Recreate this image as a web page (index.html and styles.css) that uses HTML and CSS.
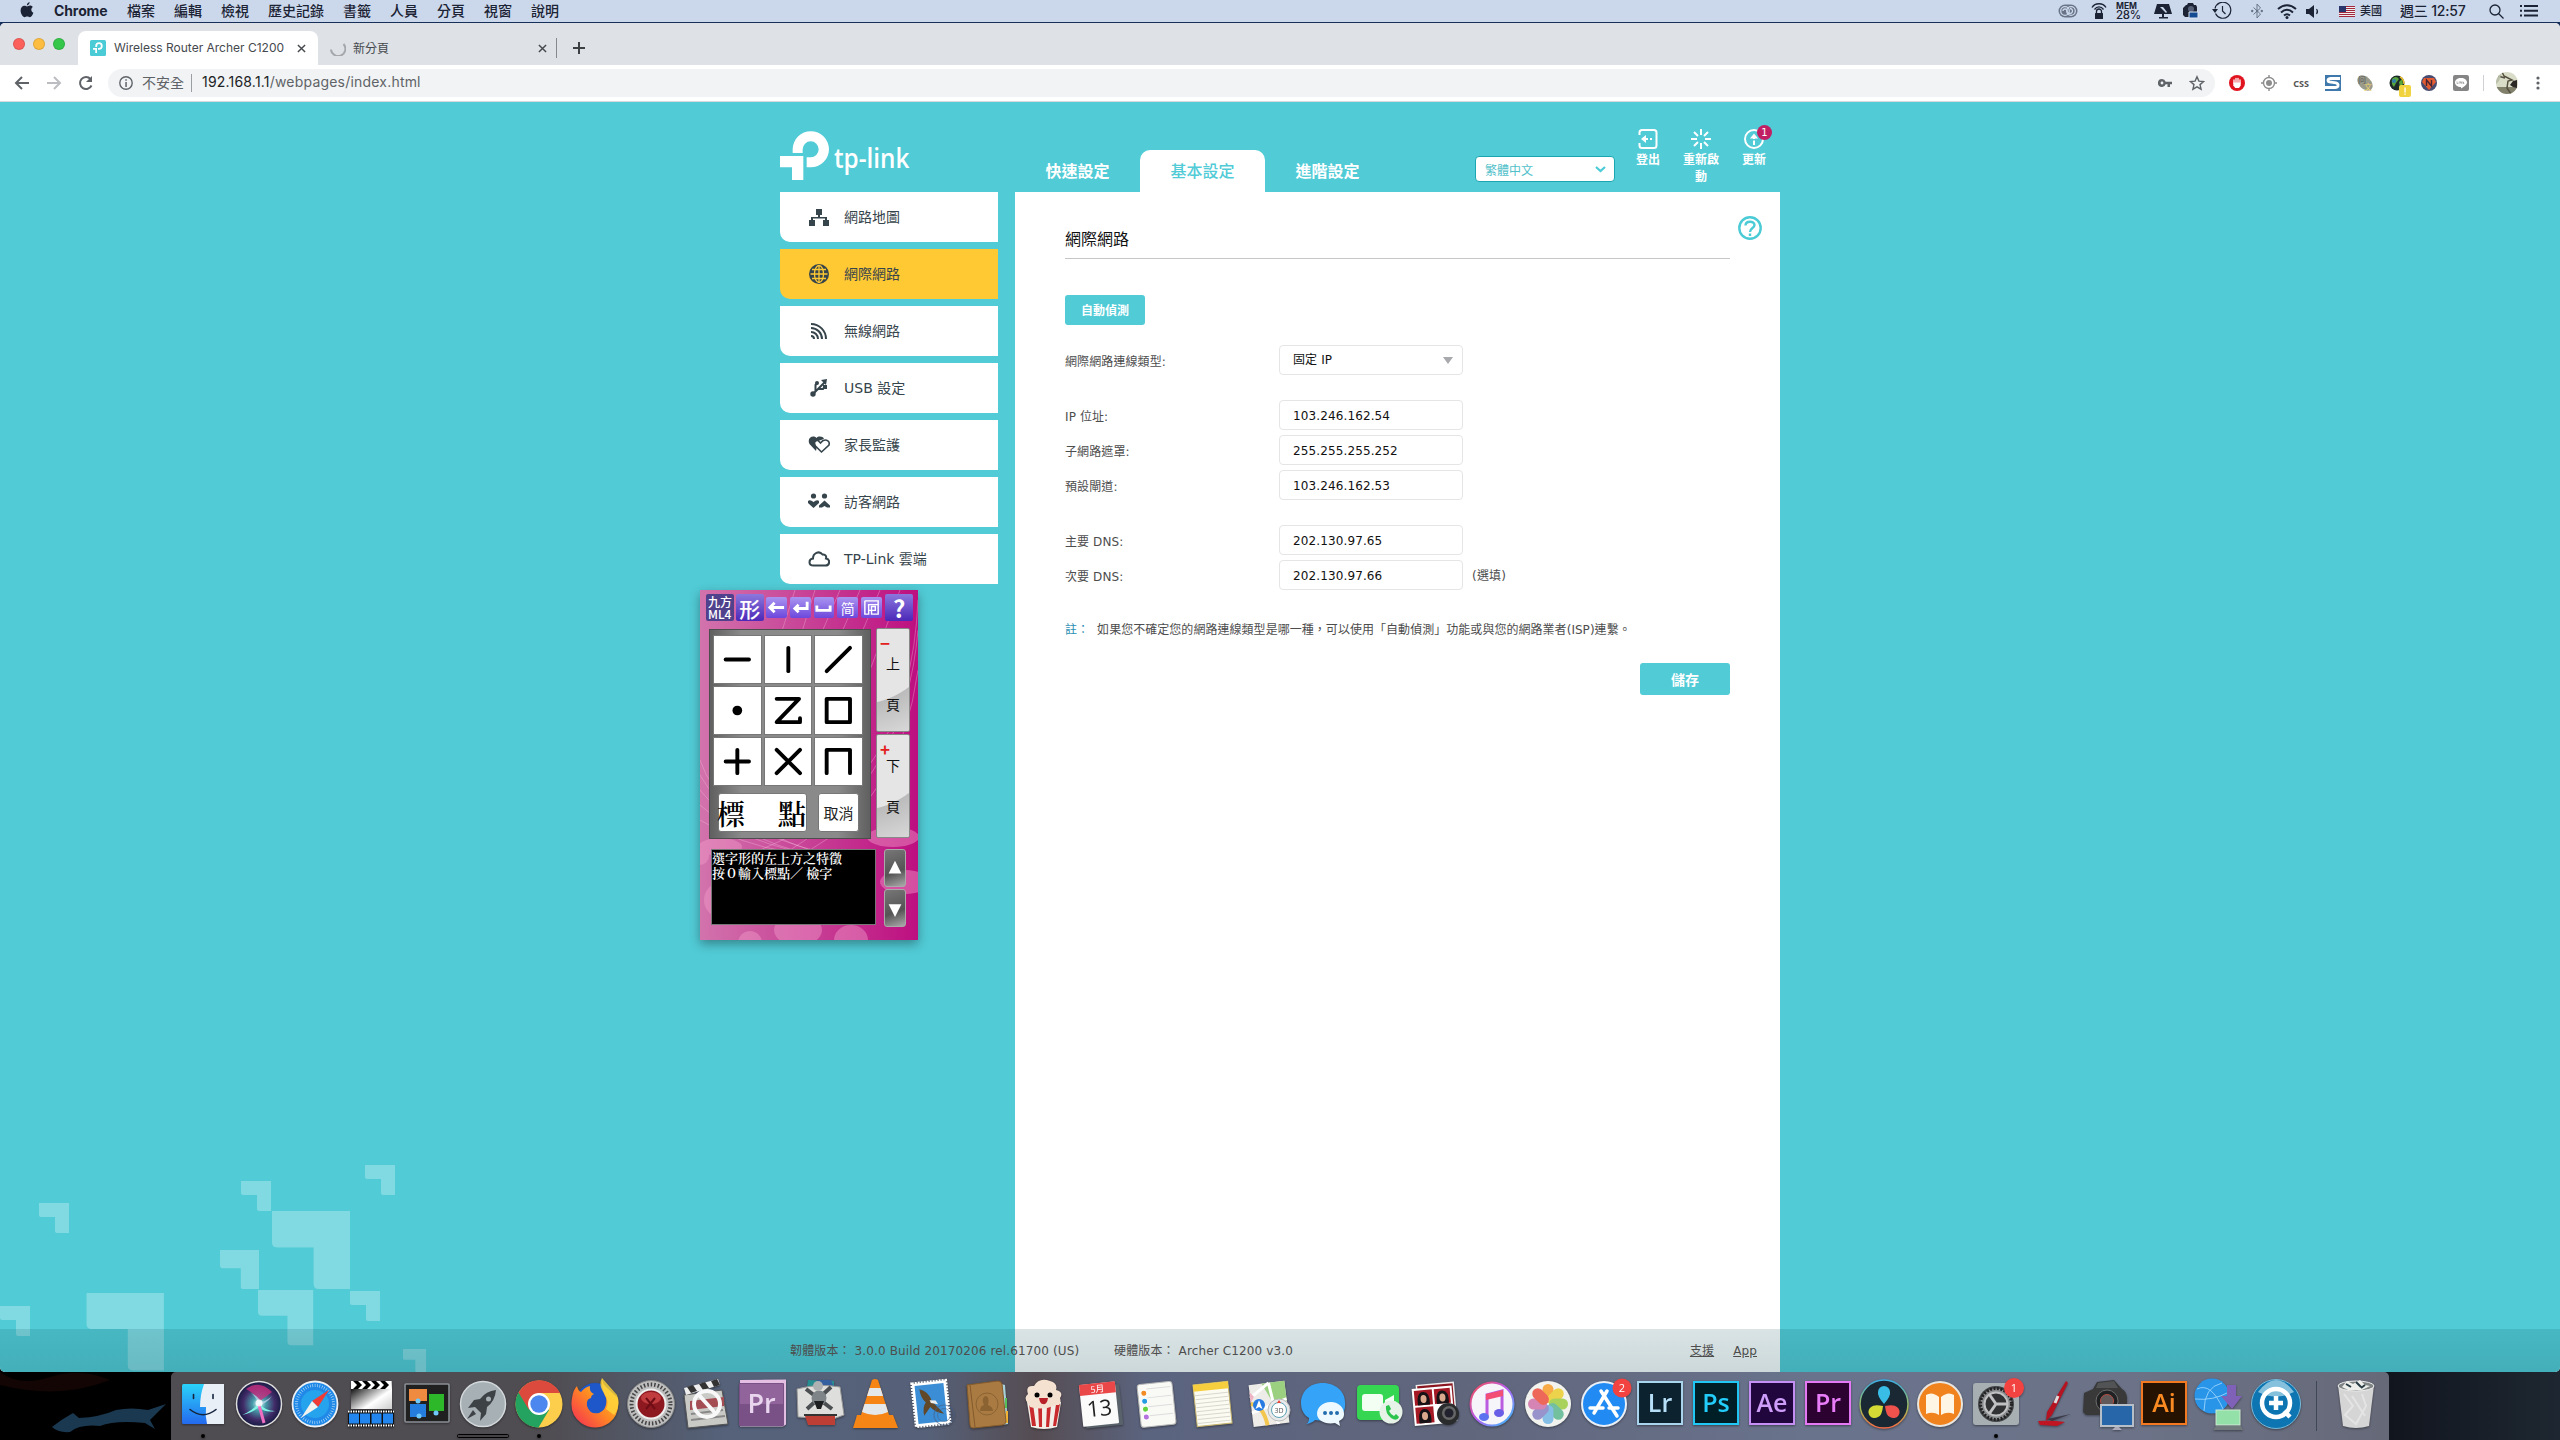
FILE: index.html
```html
<!DOCTYPE html>
<html lang="zh-Hant">
<head>
<meta charset="utf-8">
<title>Wireless Router Archer C1200</title>
<link rel="stylesheet" href="styles.css">
</head>
<body>
<div class="desktop">
  <header class="menubar">
    <svg class="apple" viewBox="0 0 14 16"><path d="M9.6 0C9.700 1.500 8.400 3.300 6.900 3.400 6.700 1.900 8.100.300 9.600 0ZM7 4.400C7.700 4.400 8.700 3.600 10 3.600 11.200 3.600 12.300 4.200 12.900 5.100 10.600 6.500 10.900 9.800 13.400 10.800 12.800 12.600 11.300 15.200 9.800 15.200 8.800 15.200 8.400 14.600 7.200 14.600 6 14.600 5.500 15.200 4.600 15.200 2.900 15.200.600 11.700.600 8.500.600 5.500 2.500 3.800 4.400 3.800 5.500 3.800 6.400 4.400 7 4.400Z"/></svg>
    <nav class="menus"><b>Chrome</b><span>檔案</span><span>編輯</span><span>檢視</span><span>歷史記錄</span><span>書籤</span><span>人員</span><span>分頁</span><span>視窗</span><span>說明</span></nav>
    <div class="status">
      <svg class="dim" width="20" height="14" viewBox="0 0 20 14"><rect x=".500" y=".500" width="19" height="13" rx="6.500"/><g fill="none" stroke="#cbd8ec" stroke-width="1.300"><circle cx="7" cy="7" r="4.300"/><circle cx="13" cy="7" r="4.300"/><path d="M5 7a2 2 0 0 1 4 0q1 3 3 2.500a2.300 2.300 0 1 0 0-5"/></g></svg>
      <svg width="16" height="18" viewBox="0 0 16 18"><g fill="none" stroke="#1b2334" stroke-width="1.300"><path d="M1 5.500C4 .500 12 .500 15 5.500M3.500 7.500C6 4 10 4 12.500 7.500M5.500 12V9.500a2.500 2.500 0 0 1 5 0V12"/></g><rect x="4" y="11" width="8" height="6" rx=".500"/></svg>
      <span class="mem"><small>MEM</small><span>28%</span></span>
      <svg width="18" height="16" viewBox="0 0 18 16"><path d="M3 1h12l3 10H0zM5 14h9v1.500H5zM8 11h2v4H8z"/><path d="M6 4l6 6 1-1-4-5z" fill="#cbd8ec"/></svg>
      <svg width="18" height="16" viewBox="0 0 18 16"><path d="M4 2h1l1-2h5l1 2h2l1 2v10H3L1 12V5z"/><circle cx="9" cy="6" r="3" fill="#566178"/><path d="M7 9h9v6H7z" fill="#154b91" stroke="#dde6f3"/></svg>
      <svg width="20" height="18" viewBox="0 0 20 18"><g fill="none" stroke="#1b2334" stroke-width="1.200"><path d="M3.500 11.500A8 8 0 1 0 3 6.500M10.500 4v5l3 3"/></g><path d="M0 7h6L3 11z"/></svg>
      <svg class="dim" width="12" height="16" viewBox="0 0 12 16"><path d="M2.500 4.500l7 6.500-3.500 4V1l3.500 4-7 6.500" fill="none" stroke="#1b2334"/><circle cx="1.200" cy="8" r="1.200"/><circle cx="6" cy="8" r="1.200"/><circle cx="10.800" cy="8" r="1.200"/></svg>
      <svg width="20" height="15" viewBox="0 0 20 15"><g fill="none" stroke="#1b2334" stroke-width="2"><path d="M1 5Q10-2.500 19 5M4 8.500Q10 3 16 8.500M7 11.500Q10 9 13 11.500"/></g><circle cx="10" cy="13.500" r="1.500"/></svg>
      <svg width="14" height="13" viewBox="0 0 14 13"><path d="M0 4h3l5-4v13L3 9H0z"/><path d="M10.500 4q2 2.500 0 5" fill="none" stroke="#1b2334" stroke-width="1.200"/></svg>
      <span class="input-source"><svg width="16" height="11" viewBox="0 0 16 11"><rect width="16" height="11" fill="#eee"/><path d="M0 .500h16M0 2.500h16M0 4.500h16M0 6.500h16M0 8.500h16M0 10.500h16" stroke="#a32a3c"/><rect width="7" height="6" fill="#28366b"/></svg>美國</span>
      <span class="clock">週三 12:57</span>
      <svg width="15" height="15" viewBox="0 0 15 15"><g fill="none" stroke="#1b2334" stroke-width="1.300"><circle cx="6" cy="6" r="5"/><path d="M9.500 9.500l5 5"/></g></svg>
      <svg width="18" height="12" viewBox="0 0 18 12"><path d="M0 0h2v2H0zM4 0h14v2H4zM0 4.700h2v2H0zM4 4.700h14v2H4zM0 9.500h2v2H0zM4 9.500h14v2H4z"/></svg>
    </div>
  </header>

  <main class="window">
    <div class="tabstrip">
      <div class="lights"><i class="red"></i><i class="amber"></i><i class="green"></i></div>
      <div class="tab active">
        <svg width="16" height="16" viewBox="0 0 16 16"><rect width="16" height="16" rx="1.500" fill="#4acbd6"/><path d="M6.200 7V6a2.800 2.800 0 1 1 2.800 2.800H8" fill="none" stroke="#fff" stroke-width="1.800"/><path d="M3 8h4v5H5.300V9.800H3z" fill="#fff"/></svg>
        <span>Wireless Router Archer C1200</span>
        <svg class="close" viewBox="0 0 10 10"><path d="M1 1l8 8M9 1L1 9"/></svg>
      </div>
      <div class="tab">
        <svg width="16" height="16" viewBox="0 0 16 16"><path d="M1 9.500A7.200 7.200 0 1 0 13.500 4" fill="none" stroke="#a5a7ab" stroke-width="2"/></svg>
        <span>新分頁</span>
        <svg class="close" viewBox="0 0 10 10"><path d="M1 1l8 8M9 1L1 9"/></svg>
      </div>
      <svg class="plus" viewBox="0 0 12 12"><path d="M6 0v12M0 6h12"/></svg>
    </div>
    <div class="toolbar">
      <div class="nav-buttons">
        <svg viewBox="0 0 16 16"><path d="M15 8H2M8 2L2 8l6 6"/></svg>
        <svg class="off" viewBox="0 0 16 16"><path d="M1 8h13M8 2l6 6-6 6"/></svg>
        <svg viewBox="0 0 16 16"><path d="M13.500 10.500A6 6 0 1 1 12.500 4"/><path d="M14 1v6H8z" fill="#5f6368" stroke="none"/></svg>
      </div>
      <div class="omnibox">
        <svg width="14" height="14" viewBox="0 0 14 14"><circle cx="7" cy="7" r="6.200" fill="none" stroke="#5f6368" stroke-width="1.400"/><path d="M6.300 3.300h1.500v1.500H6.300zM6.300 6h1.500v5H6.300z" fill="#5f6368"/></svg>
        <span class="insecure">不安全</span>
        <span class="url"><em>192.168.1.1</em>/webpages/index.html</span>
        <div class="actions">
          <svg width="14" height="10" viewBox="0 0 14 10"><path d="M4 1a4 4 0 1 0 3.700 5.300H9.500V9H12V6.300h2V3.700H7.700A4 4 0 0 0 4 1zm0 2.600A1.400 1.400 0 1 1 4 6.400 1.400 1.400 0 0 1 4 3.600z" fill="#5f6368"/></svg>
          <svg width="16" height="16" viewBox="0 0 16 16"><path d="M8 1.800l1.900 4.300 4.700.400-3.600 3.100 1.100 4.600L8 11.800l-4.100 2.400L5 9.600 1.400 6.500l4.700-.400z" fill="none" stroke="#5f6368" stroke-width="1.400"/></svg>
        </div>
      </div>
      <div class="extensions">
        <svg width="16" height="16" viewBox="0 0 16 16"><circle cx="8" cy="8" r="8" fill="#e0141f"/><path d="M5 8V5M7 7.500V3.500M9 7.500V3.500M11 8V5" stroke="#fff" stroke-width="1.300" stroke-linecap="round"/><path d="M4.300 7.500h7.400V10.500L10 13H6.300L4.300 10.500z" fill="#fff"/></svg>
        <svg width="16" height="16" viewBox="0 0 16 16"><g fill="none" stroke="#8d8d8d" stroke-width="1.400"><circle cx="8" cy="8" r="5.500"/><path d="M8 0v3M8 13v3M0 8h3M13 8h3"/></g><circle cx="8" cy="8" r="3" fill="#8d8d8d"/></svg>
        <span class="css">CSS</span>
        <svg width="16" height="16" viewBox="0 0 16 16"><rect width="16" height="16" fill="#3f78aa"/><path d="M15 3.500H6Q3 3.500 3 5.200 3 7 6 7.200L11 7.800Q13.500 8.500 13 11 12.500 12.500 10 12.500H0" fill="none" stroke="#fff" stroke-width="2.800"/></svg>
        <svg width="16" height="16" viewBox="0 0 16 16"><ellipse cx="8" cy="8" rx="9" ry="6" transform="rotate(45 8 8)" fill="#9a9a8b"/><text x="1" y="8" font-size="8" fill="#555">问</text><text x="7" y="15" font-size="8" fill="#ead36c">文</text></svg>
        <svg class="globe" width="22" height="22" viewBox="0 0 22 22"><circle cx="8" cy="8" r="7.500" fill="#1d2b28"/><path d="M3 4q4-4 7 0l-3 4-2 4q-3-3-2-8zM10 7l3-3 1 5-3 3z" fill="#57a53d"/><circle cx="5" cy="6" r="2" fill="#2f7cab"/><path d="M11 2q4 2 4 7" stroke="#ecc12f" stroke-width="1.500" fill="none"/><rect x="10" y="10" width="12" height="12" rx="2" fill="#f1d340"/><path d="M15.400 12.500h1.300v5h-1.300zM15.400 18.500h1.300v1.300h-1.300z" fill="#fff"/></svg>
        <svg width="16" height="16" viewBox="0 0 16 16"><circle cx="8" cy="8" r="8" fill="#494c71"/><path d="M3 3h10l2 4-7 8-7-8z" fill="#e35c32"/><path d="M5.500 11V5l5 6V5" fill="none" stroke="#4a2531" stroke-width="1.400"/></svg>
        <svg width="16" height="16" viewBox="0 0 16 16"><rect width="16" height="16" rx="2" fill="#858585"/><path d="M8 3c3.500 0 6 2 6 4.500S10 12.500 8 13.500V12C4.500 12 2 10 2 7.500S4.500 3 8 3z" fill="#fff"/><path d="M4 6.500v2h1.300M6.200 6.500v2M7.300 8.500v-2l1.400 2v-2M10 6.500v2h1.300M10 7.500h1" fill="none" stroke="#858585" stroke-width=".600"/></svg>
      </div>
      <i class="rule"></i>
      <svg class="avatar" viewBox="0 0 22 22"><defs><clipPath id="av"><circle cx="11" cy="11" r="11"/></clipPath></defs><g clip-path="url(#av)"><rect width="22" height="22" fill="#d9ddc8"/><path d="M0 15h22v8H0z" fill="#80806b"/><path d="M6 0l2 4 8 4-4 1-1 7 4 6M2 4l7 2" fill="none" stroke="#55503f" stroke-width="1.500"/><path d="M17 9l4-1v8l-4-1-3-2z" fill="#2b2724"/><path d="M0 0h6L3 9 0 12z" fill="#b8bea8"/></g></svg>
      <svg class="more" viewBox="0 0 4 14"><circle cx="2" cy="2" r="1.600"/><circle cx="2" cy="7" r="1.600"/><circle cx="2" cy="12" r="1.600"/></svg>
    </div>

    <div class="page">
      <svg class="decor" viewBox="0 0 440 212">
        <defs><path id="ell" d="M0 0H30V30H18Q16 30 16 28V14H2Q0 14 0 12Z"/></defs>
        <g fill="#fff" fill-opacity=".28">
          <use href="#ell" x="39" y="43"/><use href="#ell" x="241" y="21"/><use href="#ell" x="365" y="5"/><use href="#ell" x="350" y="131"/><use href="#ell" x="0" y="146"/>
          <use href="#ell" transform="translate(403 189) scale(.77)"/>
          <use href="#ell" transform="translate(272 51) scale(2.6)"/>
          <use href="#ell" transform="translate(220 90) scale(1.3)"/>
          <use href="#ell" transform="translate(258 130) scale(1.840)"/>
          <use href="#ell" transform="translate(86.500 133) scale(2.580)"/>
        </g>
      </svg>
      <div class="wrap">
        <div class="topbar">
          <svg class="logo" viewBox="60 63 393 147"><path d="M98 129V118a54.500 54.500 0 0 1 109 0 54.500 54.500 0 0 1-54.500 54H140V142H152a24 24 0 1 0-24-24V129ZM60 138H130V210H96V172H60Z"/><text x="222" y="174" font-size="80" textLength="226" lengthAdjust="spacingAndGlyphs">tp-link</text></svg>
          <nav class="modes"><a>快速設定</a><a class="on">基本設定</a><a>進階設定</a></nav>
          <div class="lang">繁體中文<svg width="11" height="7" viewBox="0 0 11 7"><path d="M1 1l4.500 4L10 1" fill="none" stroke="#4acbd6" stroke-width="2.200"/></svg></div>
          <div class="tools">
            <a><svg width="20" height="20" viewBox="0 0 20 20"><path d="M1.500 6V3.500Q1.500 1 4 1H16Q18.500 1 18.500 3.500V16.500Q18.500 19 16 19H4Q1.500 19 1.500 16.500V14"/><path d="M7 10h3M12 10h2"/><path d="M3 10l5-4v8z" fill="#fff" stroke="none"/></svg>登出</a>
            <a><svg width="20" height="20" viewBox="0 0 20 20"><path d="M10 0v6M10 14v6M0 10h6M14 10h6M3 3l4 4M13 13l4 4M17 3l-4 4M3 17l4-4"/></svg>重新啟動</a>
            <a class="update"><svg width="20" height="20" viewBox="0 0 20 20"><circle cx="10" cy="10" r="9"/><path d="M10 7v3M10 11.500V16" /><path d="M6 9.500l4-5 4 5z" fill="#fff" stroke="none"/></svg>更新<i>1</i></a>
          </div>
        </div>
        <div class="columns">
          <aside class="sidebar">
            <a><svg viewBox="0 0 22 22"><path d="M8 3h6v6H8zM1 14h6v6H1zM15 14h6v6h-6zM10 9h2v2h7v3h-2v-1.500H5V14H3v-3h7z"/></svg>網路地圖</a>
            <a class="on"><svg viewBox="0 0 22 22"><circle cx="11" cy="11" r="10"/><g fill="none" stroke="#ffc933" stroke-width="1.300"><ellipse cx="11" cy="11" rx="4.500" ry="8.500"/><path d="M11 2v18M2.500 11h17M4 6.500h14M4 15.500h14"/></g></svg>網際網路</a>
            <a><svg viewBox="0 0 22 22"><g fill="none" stroke="#36444b" stroke-width="2"><path d="M3 4A15 15 0 0 1 18 19M3 8A11 11 0 0 1 14 19M3 12A7 7 0 0 1 10 19M3 16A3 3 0 0 1 6 19"/></g></svg>無線網路</a>
            <a><svg viewBox="0 0 22 22"><g fill="none" stroke="#36444b" stroke-width="2"><path d="M5 17L17 5M7.500 14V8l2-2M10 12h5l2-3"/></g><circle cx="5" cy="17" r="2.700"/><circle cx="9" cy="6" r="2"/><path d="M13 3l6-1-1 6zM15 8h4v4h-4z"/></svg>USB 設定</a>
            <a><svg viewBox="0 0 22 22"><path d="M8 17L1.500 10C-1.500 4 5 .500 8.500 4 10 2 15 2 16 5L10 7z"/><path d="M13.500 18L7.500 12C5 8 8 6 10 6.500L12.500 9C16 4 22.500 6 21 11Z" fill="#fff" stroke="#36444b" stroke-width="1.600"/></svg>家長監護</a>
            <a><svg viewBox="0 0 22 22"><circle cx="5.500" cy="5" r="2.600"/><circle cx="16.500" cy="5" r="2.600"/><path d="M0 10q2-2 5.500 1 3.500-3 5.500-1v2l-5.500 5L0 12zM16.500 9.500l5.500 5v2h-3l-2.500-1.500-2.500 1.500h-3v-2z"/></svg>訪客網路</a>
            <a><svg viewBox="0 0 22 22"><path d="M5.500 17.500C0 17.500.500 11 5 10.500 5 5.500 11 2 14.500 6.500 18 6 18.500 9 18 10.500 22.500 11 22 17.500 17.500 17.500Z" fill="none" stroke="#36444b" stroke-width="2"/></svg>TP-Link 雲端</a>
          </aside>
          <section class="panel">
            <div class="title"><h1>網際網路</h1><svg class="help" viewBox="0 0 24 24"><circle cx="12" cy="12" r="10.700"/><path d="M7.500 9.500C7.500 4.500 16.500 4.500 16.500 9 16.500 12 12 12 12 16"/><path d="M12 17.500v2.500"/></svg></div>
            <button class="detect">自動偵測</button>
            <div class="form">
              <label>網際網路連線類型:</label><div class="field pick"><span>固定 IP</span><i></i></div><span></span>
              <label class="first">IP 位址:</label><div class="field first">103.246.162.54</div><span></span>
              <label>子網路遮罩:</label><div class="field">255.255.255.252</div><span></span>
              <label>預設閘道:</label><div class="field">103.246.162.53</div><span></span>
              <label class="first">主要 DNS:</label><div class="field first">202.130.97.65</div><span></span>
              <label>次要 DNS:</label><div class="field">202.130.97.66</div><span class="hint">(選填)</span>
            </div>
            <p class="note"><b>註：</b><span>如果您不確定您的網路連線類型是哪一種，可以使用「自動偵測」功能或與您的網路業者(ISP)連繫。</span></p>
            <button class="save">儲存</button>
          </section>
        </div>
      </div>
      <footer class="version">
        <div><span class="fw">韌體版本： 3.0.0 Build 20170206 rel.61700 (US)</span><span>硬體版本： Archer C1200 v3.0</span><a class="support">支援</a><a>App</a></div>
      </footer>
    </div>
  </main>

  <div class="dockrow">
    <svg class="shark" viewBox="0 0 171 68"><path d="M52 55Q62 47 73 41l6 5Q100 45 116 38q15-3 32 0l18-6-16 16 5 9-10-6Q115 48 100 54q-20-2-30 6-12 1-18-5z" fill="#1a3850"/><path d="M0 0q20 15 50 5t60 3q-50 20-110 5z" fill="#120503"/></svg>
    <div class="dock">
      <svg viewBox="0 0 56 68"><defs><linearGradient id="fb" x2="0" y2="1"><stop stop-color="#2ad3fa"/><stop offset="1" stop-color="#2469ee"/></linearGradient></defs><rect x="7" y="12" width="42" height="40" rx="1.500" fill="url(#fb)"/><path d="M29 12q-4 11-4 23h6q-1 9 1 17h17V12z" fill="#e9eff7"/><path d="M18.500 22.500v4M38 22.500v4M15 37.500q13 10.500 26 0" fill="none" stroke="#14243b" stroke-width="1.600" stroke-linecap="round"/><circle cx="28" cy="64" r="2"/></svg>
      <svg viewBox="0 0 56 68"><defs><radialGradient id="si"><stop stop-color="#d5fffa"/><stop offset=".300" stop-color="#469ba9"/><stop offset=".700" stop-color="#412b68"/><stop offset="1" stop-color="#151b42"/></radialGradient></defs><circle cx="28" cy="32" r="22.500" fill="url(#si)" stroke="#ddd" stroke-width="1.500"/><path d="M15 17q13-10 26 3l-12 9q-6-8-14-12z" fill="#c6307f" opacity=".800"/><path d="M11 43q10-4 17-12 6 8 16 8-10 2-16-4-7 6-17 8z" fill="#7ff5e6"/><path d="M28 32q-4-8-8-11 7 3 10 9 7-2 11-6-4 6-11 9z" fill="#c5d9ef" opacity=".700"/><path d="M28 33l5 18" stroke="#ef6ec1" stroke-width="3"/><circle cx="28" cy="31" r="3.500" fill="#fff" opacity=".800"/></svg>
      <svg viewBox="0 0 56 68"><circle cx="28" cy="32" r="22.500" fill="#2089e8" stroke="#eef1f4" stroke-width="1.800"/><circle cx="28" cy="32" r="14" fill="#29aef0" opacity=".700"/><circle cx="28" cy="32" r="18.500" fill="none" stroke="#bfe2fa" stroke-width="3" stroke-dasharray=".600 1.800"/><path d="M42 18L31 35l-6-6z" fill="#f03a36"/><path d="M14 46l11-17 6 6z" fill="#f1f1ef"/></svg>
      <svg viewBox="0 0 56 68"><defs><linearGradient id="cl" x2="1" y2="1"><stop offset=".100"/><stop offset=".650" stop-color="#fff"/><stop offset="1" stop-color="#ccc"/></linearGradient></defs><rect x="8" y="9" width="41" height="28" fill="url(#cl)"/><path d="M8 9h40v8H8z" fill="#fff"/><path d="M10 9h5l4 4-4 4h-5l4-4zM19 9h5l4 4-4 4h-5l4-4zM28 9h5l4 4-4 4h-5l4-4zM37 9h5l4 4-4 4h-5l4-4z"/><rect x="5" y="38" width="46" height="17" fill="#111"/><path d="M5 39.500h46M5 53.500h46" stroke="#fff" stroke-width="2" stroke-dasharray="1.500 1"/><path d="M6 41.500h10v10H6zM17 41.500h10v10H17zM28.500 41.500h10v10h-10zM40 41.500h10v10H40z" fill="#2386ef"/></svg>
      <svg viewBox="0 0 56 68"><rect x="6" y="12" width="44" height="38" rx="1" fill="#202020" stroke="#8a9096" stroke-width="1.600"/><path d="M10 17h18v12H10z" fill="#ee8b41"/><path d="M30 22h15v17H30z" fill="#2db82a"/><path d="M11 32h16v13H11z" fill="#257ddd"/><g fill="#6fc9fb"><circle cx="19" cy="29" r="2.500"/><circle cx="37" cy="41" r="2.500"/><circle cx="20" cy="44" r="2.500"/></g></svg>
      <svg viewBox="0 0 56 68"><circle cx="28" cy="32" r="22.500" fill="#a7b0b5" stroke="#d3d9dc" stroke-width="1.500"/><path d="M41 18q-10 1-16 9l-6 1-6 8 7-1 6 6-1 8 6-7 1-7q8-6 9-17z" fill="#3d4247"/><path d="M18 38l-6 9 9-5z" fill="#3d4247"/><circle cx="33.500" cy="27" r="2.500" fill="#a7b0b5"/><rect x="2.500" y="62.500" width="51" height="3" rx="1" fill="none" stroke="#000"/></svg>
      <svg viewBox="0 0 56 68"><circle cx="28" cy="32" r="23.500" fill="#fdce4b"/><path d="M28 32L7.500 20.500a23.500 23.500 0 0 0 20 35L38 38z" fill="#24a25f"/><path d="M28 21h21A23.500 23.500 0 0 0 7.500 20.500L18 38l3-14z" fill="#dc4a3e"/><circle cx="28" cy="32" r="11" fill="#fff"/><circle cx="28" cy="32" r="8.700" fill="#4b87ee"/><circle cx="28" cy="64" r="2"/></svg>
      <svg viewBox="0 0 56 68"><defs><linearGradient id="ff" x1="1" y1="0" x2="0" y2="1"><stop stop-color="#ffe43c"/><stop offset=".500" stop-color="#ff8a22"/><stop offset="1" stop-color="#f42658"/></linearGradient></defs><circle cx="28" cy="30" r="19" fill="#1d57c9"/><path d="M35 6q0 5 4 9t12 11q2 17-9 25-14 9-28 0Q2 42 5 26q1-8 5-12 1 5 4 6 4-5 9-6-1 6 4 8-3 1-3 4-5 1-4 8 3 9 12 7 9-4 7-15-5-9-4-20z" fill="url(#ff)"/><path d="M35 6q-4 7 2 15t2 16l8 6q7-9 3-20-7-8-15-17z" fill="#ffd63b" opacity=".800"/></svg>
      <svg viewBox="0 0 56 68"><circle cx="28" cy="32" r="23.500" fill="#bebebe" stroke="#888"/><circle cx="28" cy="32" r="19.500" fill="none" stroke="#444" stroke-width="4" stroke-dasharray="1.500 2"/><circle cx="28" cy="32" r="14.500" fill="#8d1820" stroke="#eee" stroke-width="2"/><ellipse cx="28" cy="26" rx="10" ry="6" fill="#e45555" opacity=".600"/><path d="M23 26l9 11M32 26l-9 11" stroke="#6f0d15" stroke-width="2"/></svg>
      <svg viewBox="0 0 56 68"><path d="M5 23l38-5 6 34-40 4z" fill="#c9c9c6" stroke="#555"/><path d="M5 16L39 7l2 6L7 23z" fill="#eee"/><path d="M8 15l6-2 4 6-6 2zM20 12l6-2 4 6-6 2zM32 9l6-2 3 6-6 2z" fill="#333"/><path d="M11 29l34-4v9l-34 4z" fill="#a44d52"/><path d="M12 42l32-4M12 48l34-4" stroke="#888" stroke-width="2"/><circle cx="28" cy="32" r="13" fill="none" stroke="#f8f8f8" stroke-width="4"/><path d="M19 22l18 20" stroke="#f8f8f8" stroke-width="4"/></svg>
      <svg viewBox="0 0 56 68"><path d="M5 8l46-.500v45l-3 2H5z" fill="#e4bfe3"/><rect x="4" y="11" width="45" height="43" rx="1" fill="#795187"/><path d="M5 12h43v20H5z" fill="#9c6ca5" opacity=".700"/><text x="26.500" y="41" font-size="27" font-weight="600" text-anchor="middle" fill="#e9d5ee">Pr</text></svg>
      <svg viewBox="0 0 56 68"><path d="M17 8l26 1v12H15z" fill="#288d91"/><path d="M26 8h14l3 8H26z" fill="#35609f"/><path d="M6 17q22-6 43-2l4 28-11 4-35-2z" fill="#dededc" stroke="#999"/><path d="M14 44l30-2v11H17z" fill="#bd3e35"/><path d="M13 43h33" stroke="#333" stroke-width="2"/><g stroke="#4c4f51" stroke-width="4"><path d="M15 17l26 20M40 15L16 37"/></g><circle cx="28" cy="26" r="7.500" fill="#7e8487"/><circle cx="27" cy="14" r="5" fill="#aeb1b2"/><path d="M23 29h10l-3 8h-4z" fill="#1d1f20"/></svg>
      <svg viewBox="0 0 56 68"><path d="M10 43h36l5 13H6z" fill="#f58616"/><path d="M25 8q3-2 6 0l12 38q-15 7-30 0z" fill="#f68515"/><path d="M22.500 16h11l2.500 8H20zM17.500 32h21l2.500 8q-13 6-26 0z" fill="#e5e8ea"/></svg>
      <svg viewBox="0 0 56 68"><g transform="rotate(-6 28 32)"><rect x="11" y="10" width="34" height="43" fill="#fff" stroke="#fff" stroke-width="3" stroke-dasharray="2 1"/><rect x="13.500" y="12.500" width="29" height="38" fill="#3b8ed5"/><path d="M18 16q9 3 11 13l11 14q-9-2-13-8l-7 8q-1-9 3-13-5-6-5-14z" fill="#604829"/><path d="M27 28l6 1 2 4-7-2z" fill="#eee"/></g><circle cx="41" cy="43" r="10" fill="none" stroke="#44618a" stroke-opacity=".600" stroke-width="1.200"/><circle cx="41" cy="43" r="6.500" fill="none" stroke="#44618a" stroke-opacity=".600"/></svg>
      <svg viewBox="0 0 56 68"><path d="M39 11l7 2 3 39-6 1z" fill="#a8d0d8"/><path d="M46 26h2v10h-2z" fill="#55bf59"/><path d="M47 39h2v12h-2z" fill="#f1b335"/><path d="M8 13l31-4q3 0 4 3l4 38q-1 3-4 3l-29 3q-3 0-3-3z" fill="#a97b42" stroke="#855c2c"/><path d="M11 13l5 42" stroke="#845a2c"/><circle cx="28" cy="32" r="11" fill="none" stroke="#8b6232"/><path d="M21 39q0-5 4-6-3-6 1-9 5 0 3 9 5 2 5 6" fill="#8b6232"/></svg>
      <svg viewBox="0 0 56 68"><path d="M12 30l34 0-4 25q-13 4-26 0z" fill="#f4eee8"/><path d="M14 32h4l3 22h-4zM23 33h4v22h-3zM32 33h4l-2 22h-3zM41 32h4l-4 22h-3z" fill="#c82a2d"/><path d="M13 31q-5-5 0-9-3-9 6-8 5-9 16-5 8 2 6 9 8 2 4 8 2 8-4 7-13 6-26 2z" fill="#f4e1cf"/><circle cx="22" cy="23" r="2.500"/><circle cx="35" cy="23" r="2.500"/><path d="M24 26h9q-1 7-5 6-3 0-4-6z" fill="#b92129"/></svg>
      <svg viewBox="0 0 56 68"><g transform="rotate(-6 28 32)"><rect x="12" y="14" width="37" height="41" fill="#59626a"/><rect x="9" y="11" width="36" height="42" rx="1" fill="#fbfbfb"/><path d="M9 11h36v11H9z" fill="#e94748"/><text x="27" y="20" font-size="9" text-anchor="middle" fill="#fff">5月</text><text x="27" y="44" font-size="22" text-anchor="middle" fill="#222">13</text></g></svg>
      <svg viewBox="0 0 56 68"><g transform="rotate(-6 28 32)"><rect x="11" y="11" width="35" height="43" rx="3" fill="#f9f9f6" stroke="#b9b9b9"/><path d="M20 16h24M20 25h24M20 34h24M20 43h24" stroke="#ddd"/><g stroke="#fff"><circle cx="17" cy="20" r="3" fill="#f28b23"/><circle cx="17" cy="28" r="3" fill="#259be2"/><circle cx="17" cy="36" r="3" fill="#65d33f"/><circle cx="17" cy="44" r="3" fill="#b472df"/></g></g></svg>
      <svg viewBox="0 0 56 68"><g transform="rotate(-6 28 32)"><rect x="11" y="11" width="35" height="42" fill="#fcfbf2" stroke="#c5b46f"/><path d="M11 11h35v7H11z" fill="#f7cf3e"/><path d="M12 22h33M12 26h33M12 30h33M12 34h33M12 38h33M12 42h33M12 46h33M12 50h33" stroke="#d8d7cf"/></g></svg>
      <svg viewBox="0 0 56 68"><g transform="rotate(-7 28 32)"><rect x="11" y="11" width="36" height="42" fill="#edece8"/><path d="M24 11h23v20H33z" fill="#9bd080"/><path d="M11 24l20-13M11 39l36-10M31 11l5 42" stroke="#fff" stroke-width="3"/><path d="M11 30q12 3 14 23" stroke="#f3c74f" stroke-width="4" fill="none"/><path d="M11 18l4 5-4 6z" fill="#efb3c3"/></g><circle cx="19" cy="33" r="6" fill="#277be2"/><path d="M19 28l3.500 9-3.500-2-3.500 2z" fill="#fff"/><circle cx="39" cy="38" r="11" fill="#e8eaeb" stroke="#bbb"/><circle cx="39" cy="38" r="7.500" fill="#fff" stroke="#5ba1b5"/><text x="39" y="41" font-size="7" text-anchor="middle" fill="#555">3D</text><path d="M39 28l2 3h-4z" fill="#e43"/></svg>
      <svg viewBox="0 0 56 68"><path d="M27 11C12 11 5 21 5 31c0 7 3 12 8 15q0 5-3 6 6-1 9-4 32 4 30-18C49 20 40 11 27 11z" fill="#34a3f8"/><path d="M35 30c-9 0-14 6-14 12s8 11 18 9l5 3-1-5c4-2 5-4 5-7 0-6-5-12-13-12z" fill="#eef8ff"/><g fill="#246dad"><circle cx="29" cy="41" r="2"/><circle cx="35" cy="41" r="2"/><circle cx="41" cy="41" r="2"/></g></svg>
      <svg viewBox="0 0 56 68"><rect x="5" y="13" width="42" height="35" rx="4" fill="#35d652"/><rect x="10" y="22" width="21" height="17" rx="3" fill="#f2fff2"/><path d="M33 28l9-5v14l-9-4z" fill="#f2fff2"/><circle cx="39" cy="40" r="11.500" fill="#e7f3e9"/><path d="M34 34l3-1 2 4-2 2q2 4 5 5l2-2 3 3q-2 5-8 1-6-5-5-12z" fill="#2cc44d"/></svg>
      <svg viewBox="0 0 56 68"><g transform="rotate(-5 28 32)"><rect x="10" y="12" width="37" height="38" fill="#8b1520" stroke="#eee" stroke-width="1.500"/><rect x="5" y="15" width="40" height="37" fill="#fff"/><path d="M7 17h18v15H7zM27 17h16v15H27zM7 34h18v16H7z" fill="#a51925"/><g fill="#171215"><path d="M10 32q-1-13 6-13t6 13zM29 32q-1-13 6-13t6 13zM10 50q-1-14 6-14t6 14z"/></g><g fill="#dba98d"><ellipse cx="16" cy="26" rx="3" ry="4"/><ellipse cx="35" cy="26" rx="3" ry="4"/><ellipse cx="16" cy="43" rx="3" ry="4"/></g></g><circle cx="40" cy="42" r="11" fill="#292b2d"/><circle cx="41" cy="41" r="7" fill="#666"/><circle cx="41" cy="41" r="4.500" fill="#22222f"/></svg>
      <svg viewBox="0 0 56 68"><defs><linearGradient id="it" x2="1" y2="1"><stop stop-color="#f74a48"/><stop offset=".500" stop-color="#b560f6"/><stop offset="1" stop-color="#2ec5f8"/></linearGradient></defs><circle cx="28" cy="32" r="21.500" fill="#f5f5fa" stroke="url(#it)" stroke-width="2"/><path d="M23 45V23l15-4v22" fill="none" stroke="#ba5ce0" stroke-width="3"/><path d="M22 22l17-4v6l-17 4z" fill="#f34e73"/><ellipse cx="20" cy="45" rx="5" ry="4" fill="#5b73ef"/><ellipse cx="35" cy="41" rx="5" ry="4" fill="#695ee6"/></svg>
      <svg viewBox="0 0 56 68"><circle cx="28" cy="32" r="23" fill="#f2f3ef"/><g opacity=".880"><rect x="22.500" y="12" width="11" height="19" rx="5.500" fill="#f8a12e"/><rect x="22.500" y="12" width="11" height="19" rx="5.500" fill="#edce35" transform="rotate(45 28 32)"/><rect x="22.500" y="12" width="11" height="19" rx="5.500" fill="#a0ce4a" transform="rotate(90 28 32)"/><rect x="22.500" y="12" width="11" height="19" rx="5.500" fill="#62b995" transform="rotate(135 28 32)"/><rect x="22.500" y="12" width="11" height="19" rx="5.500" fill="#76b8e4" transform="rotate(180 28 32)"/><rect x="22.500" y="12" width="11" height="19" rx="5.500" fill="#8c86c6" transform="rotate(225 28 32)"/><rect x="22.500" y="12" width="11" height="19" rx="5.500" fill="#d275ac" transform="rotate(270 28 32)"/><rect x="22.500" y="12" width="11" height="19" rx="5.500" fill="#ee5545" transform="rotate(315 28 32)"/></g></svg>
      <svg viewBox="0 0 56 68"><circle cx="28" cy="32" r="22" fill="#218bf3" stroke="#e8eff7" stroke-width="2"/><g stroke="#fff" stroke-width="3.500" stroke-linecap="round"><path d="M31 19L18 41M25 19l16 25M14 36h13M33 36h9"/></g><circle cx="46" cy="16" r="9.500" fill="#f24340"/><text x="46" y="20" font-size="11" text-anchor="middle" fill="#fff">2</text></svg>
      <svg class="adobe" viewBox="0 0 56 68"><rect x="6" y="10" width="44" height="42" fill="#0c222f" stroke="#aad5ee" stroke-width="2"/><text x="28" y="40" fill="#b7dff7">Lr</text></svg>
      <svg class="adobe" viewBox="0 0 56 68"><rect x="6" y="10" width="44" height="42" fill="#001e26" stroke="#21c8f5" stroke-width="2"/><text x="28" y="40" fill="#23cdfa">Ps</text></svg>
      <svg class="adobe" viewBox="0 0 56 68"><rect x="6" y="10" width="44" height="42" fill="#20063d" stroke="#c58ff5" stroke-width="2"/><text x="28" y="40" fill="#ce9cf9">Ae</text></svg>
      <svg class="adobe" viewBox="0 0 56 68"><rect x="6" y="10" width="44" height="42" fill="#2b0230" stroke="#e578f5" stroke-width="2"/><text x="28" y="40" fill="#e87cf9">Pr</text></svg>
      <svg viewBox="0 0 56 68"><defs><linearGradient id="dv" x2="0" y2="1"><stop stop-color="#3baee5"/><stop offset=".600" stop-color="#a7bd52"/><stop offset="1" stop-color="#f16945"/></linearGradient></defs><circle cx="28" cy="32" r="24" fill="#192833" stroke="url(#dv)" stroke-width="1.500"/><path d="M28 32Q21 24 22 20a6 6 0 0 1 12 0Q35 24 28 32z" fill="#39bce5"/><path d="M27 34Q26 44 22 45a6 6 0 0 1-7-10Q18 32 27 34z" fill="#d5db34"/><path d="M29 34Q30 44 34 45a6 6 0 0 0 7-10Q38 32 29 34z" fill="#ef514c"/></svg>
      <svg viewBox="0 0 56 68"><circle cx="28" cy="32" r="22" fill="#f1831e" stroke="#e9e5df" stroke-width="2"/><path d="M27 25q-7-6-13-2v19q7-3 13 1zM29 25q7-6 13-2v19q-7-3-13 1z" fill="#fff5e5"/></svg>
      <svg viewBox="0 0 56 68"><rect x="5" y="11" width="46" height="42" rx="3" fill="#a8afb3"/><circle cx="28" cy="32" r="18" fill="#424548"/><circle cx="28" cy="32" r="15.500" fill="#8c8f91" stroke="#222" stroke-width="3" stroke-dasharray="2 1.500"/><circle cx="28" cy="32" r="11.500" fill="#303234" stroke="#c0c1c2" stroke-width="2"/><path d="M28 32h12M28 32l-7-10M28 32l-7 10" stroke="#c0c1c2" stroke-width="3"/><circle cx="46" cy="16" r="10" fill="#f24340"/><text x="46" y="20" font-size="11" text-anchor="middle" fill="#fff">1</text><circle cx="28" cy="64" r="2"/></svg>
      <svg viewBox="0 0 56 68"><path d="M42 9l2 2-16 32-6 6 1-9z" fill="#b51320"/><path d="M31 31l3-7" stroke="#ddd" stroke-width="3"/><path d="M23 47l24-5-19 7z" fill="#2b2630" opacity=".700"/><path d="M14 49q13-1 27 1l-8 4-17-1z" fill="#c01522"/></svg>
      <svg viewBox="0 0 56 68"><path d="M4 21l9-4 4-7 17-2 8 9q4 2 5 8v18H6L3 40z" fill="#39393a"/><path d="M18 11l16-2 4 7H16z" fill="#515355"/><circle cx="27" cy="29" r="11" fill="#202122" stroke="#6c6c6d"/><circle cx="27" cy="29" r="6.500" fill="#635959" stroke="#b34e45"/><rect x="21" y="33" width="32" height="21" fill="#2766a8" stroke="#b7c0c8" stroke-width="2"/><path d="M35 55h4l3 3H32z" fill="#aab"/></svg>
      <svg class="adobe" viewBox="0 0 56 68"><rect x="6" y="10" width="44" height="42" fill="#251201" stroke="#f37a21" stroke-width="2"/><text x="28" y="40" fill="#fa8b23">Ai</text></svg>
      <svg viewBox="0 0 56 68"><circle cx="20" cy="24" r="17.500" fill="#2895e9"/><g fill="none" stroke="#a8dcfc" stroke-width=".800"><path d="M5 17q14-7 26 20M12 39q0-24 18-28M3 27q18 2 34-7"/></g><path d="M35 13h9v11h6L40 37 29 24h6z" fill="#8061b8"/><rect x="24" y="38" width="24" height="15" fill="#93e0a9" stroke="#d1ebd5"/><path d="M24 54h25l2 4H21z" fill="#707a7c"/></svg>
      <svg viewBox="0 0 56 68"><circle cx="28" cy="32" r="24.500" fill="#0d75b2" stroke="#78bad9"/><path d="M10 20q18-24 36 0-18 9-36 0z" fill="#b9dff0" opacity=".700"/><circle cx="28" cy="31" r="14" fill="none" stroke="#fff" stroke-width="4.500"/><path d="M28 24v14M21 31h14M36 39l6 6" stroke="#fff" stroke-width="4.500"/></svg>
      <i class="divider"></i>
      <svg viewBox="0 0 56 68"><path d="M10 13q17-7 36 0l-5 41q-13 4-26 0z" fill="#d5d5d5"/><ellipse cx="28" cy="14" rx="18" ry="5" fill="#7f8585" stroke="#eee"/><path d="M14 15l5-6 6 3 7-4 5 5 5 1-8 4H20z" fill="#eeefea"/><path d="M18 12l5 3M28 10l5 5M37 13l-4 3" stroke="#273c44" stroke-width="2"/><path d="M16 22l9 12-8 9 11 9 10-18-4-12M24 24l13 20" fill="none" stroke="#e4e4e4" stroke-width="2"/></svg>
    </div>
  </div>

  <div class="ime">
    <svg class="ime-bg" viewBox="0 0 218 350"><g fill="#f19bc9" opacity=".450"><circle cx="22" cy="310" r="18"/><ellipse cx="98" cy="340" rx="24" ry="16"/><ellipse cx="151" cy="350" rx="17" ry="15"/><ellipse cx="205" cy="292" rx="25" ry="12"/><ellipse cx="20" cy="257" rx="22" ry="9"/><ellipse cx="193" cy="247" rx="26" ry="10"/><circle cx="0" cy="266" r="9"/><circle cx="50" cy="353" r="12"/></g><g fill="none" stroke="#f5c0df" stroke-opacity=".350"><path d="M95 0L60 110M115 0L90 80M140 0L110 70M160 0L130 70M180 0L150 70M200 0L170 80M218 10Q210 200 60 260M218 40Q205 190 90 260M218 80Q200 210 110 260M0 170Q20 230 110 260M0 185Q30 240 120 262M0 200Q40 250 110 264M0 215Q40 250 100 262M0 230Q40 255 90 262"/></g></svg>
    <div class="ime-top"><span class="big name">九方<br>ML4</span><span class="big">形</span><span><svg viewBox="0 0 20 20"><path d="M18 10H3M8 5l-5 5 5 5"/></svg></span><span><svg viewBox="0 0 20 20"><path d="M17 4v7H4M8 7l-4 4 4 4"/></svg></span><span><svg viewBox="0 0 20 20"><path d="M3 8v5h14V8"/></svg></span><span class="simp">简</span><span><svg class="thin" viewBox="0 0 20 20"><path d="M3 3h14v14H10V9h4v4H7M3 3v14h4V7h10"/></svg></span><span class="big q">?</span></div>
    <div class="ime-body">
      <div class="pad">
        <div class="keys">
          <svg viewBox="0 0 48 48"><path d="M12 24h24"/></svg><svg viewBox="0 0 48 48"><path d="M24 12v24"/></svg><svg viewBox="0 0 48 48"><path d="M12 36l24-24"/></svg>
          <svg viewBox="0 0 48 48"><circle cx="24" cy="24" r="5"/></svg><svg viewBox="0 0 48 48"><path d="M12 12h23L12 36h24v-4"/></svg><svg viewBox="0 0 48 48"><path d="M12 12h24v24H12z"/></svg>
          <svg viewBox="0 0 48 48"><path d="M12 24h24M24 12v24"/></svg><svg viewBox="0 0 48 48"><path d="M12 12l24 24M36 12L12 36"/></svg><svg viewBox="0 0 48 48"><path d="M12 36V12h24v24"/></svg>
        </div>
        <div class="pad-foot"><span class="punct"><b>標</b><b>點</b></span><span class="cancel">取消</span></div>
      </div>
      <div class="pager"><div><i>−</i>上<br>頁</div><div><i>+</i>下<br>頁</div></div>
    </div>
    <div class="ime-foot"><div class="tip">選字形的左上方之特徵<br>按０輸入標點／ 檢字</div><div class="scroll"><svg viewBox="0 0 22 38"><path d="M11 11l7 14H4z"/></svg><svg viewBox="0 0 22 38"><path d="M11 29l7-14H4z"/></svg></div></div>
  </div>
</div>
</body>
</html>
```
FILE: styles.css
```css
* { box-sizing: border-box; }
body { margin: 0; background: #000; font-family: Inter, "Noto Sans CJK TC", sans-serif; }
svg { display: block; flex: none; }
i, em { font-style: normal; }
.desktop { position: relative; width: 2560px; height: 1440px; overflow: hidden; display: flex; flex-direction: column; background: #16305a; }

/* macOS menu bar */
.menubar { height: 22px; flex: none; display: flex; align-items: center; padding: 0 12px 0 20px; background: #cbd8ec; color: #1b2334; font-size: 14px; font-weight: 500; line-height: 22px; }
.menubar svg { fill: #1b2334; }
.apple { width: 14px; height: 16px; margin-top: -2px; }
.menus { display: flex; gap: 19px; margin-left: 20px; flex: 1; }
.menus b { width: 54px; font-size: 14px; letter-spacing: -.1px; font-weight: 700; }
.status { display: grid; grid-template-columns: 28px 34px 33px 28px 28px 34px 36px 24px 28px 73px 82px 28px 38px; align-items: center; justify-items: center; }
.status .dim { opacity: .55; }
.mem { justify-self: start; display: flex; flex-direction: column; font-size: 11.5px; line-height: 10px; letter-spacing: -.3px; }
.mem small { font-size: 8.5px; line-height: 8px; font-weight: 700; letter-spacing: 0; }
.input-source { justify-self: end; display: flex; align-items: center; gap: 5px; font-size: 11px; width: 61px; }
.clock { justify-self: start; white-space: nowrap; letter-spacing: -.2px; }

/* browser window */
.window { margin-top: 1px; height: 1349px; flex: none; display: flex; flex-direction: column; border-radius: 5px; overflow: hidden; background: #fff; z-index: 1; }
.tabstrip { height: 42px; flex: none; display: flex; background: #dee1e6; padding-top: 8px; }
.lights { display: flex; gap: 8px; padding: 7px 13px 0; width: 78px; }
.lights i { width: 12px; height: 12px; border-radius: 50%; border: 1px solid rgba(0, 0, 0, .12); }
.red { background: #fc605b; } .amber { background: #fdbd40; } .green { background: #34c749; }
.tab { width: 240px; height: 34px; display: flex; align-items: center; padding: 0 12px; font-size: 12px; color: #45494d; }
.tab span { flex: 1; margin: -2px 0 0 8px; white-space: nowrap; }
.tab.active { background: #fff; border-radius: 8px 8px 0 0; }
.tab:not(.active) { border-right: 1px solid #85888d; height: 20px; margin-top: 7px; width: 239px; padding-right: 9px; }
.tab:not(.active) span { margin-left: 7px; }
.close { width: 9px; height: 9px; fill: none; stroke: #45494d; stroke-width: 1.6; }
.plus { width: 12px; height: 12px; margin: 11px 16px; fill: none; stroke: #3c4043; stroke-width: 2; }
.toolbar { height: 37px; flex: none; display: flex; align-items: center; border-bottom: 1px solid #d8dadd; }
.nav-buttons { width: 108px; display: flex; gap: 16px; padding-left: 14px; }
.nav-buttons svg { width: 16px; height: 16px; fill: none; stroke: #5f6368; stroke-width: 2; }
.nav-buttons .off { stroke: #bbbdc0; }
.omnibox { width: 2107px; height: 28px; border-radius: 14px; background: #f1f3f4; display: flex; align-items: center; padding-left: 11px; font-size: 14px; color: #5f6368; }
.insecure { margin-left: 9px; padding-right: 7px; line-height: 18px; border-right: 1px solid #9b9ea3; }
.url { margin-left: 10px; flex: 1; letter-spacing: .2px; line-height: 20px; margin-top: -2px; }
.url em { color: #202124; }
.actions, .extensions { display: grid; grid-auto-columns: 32px; grid-auto-flow: column; justify-items: center; align-items: center; }
.actions { margin-right: 2px; }
.extensions { margin-left: 6px; }
.css { font: 700 9px "Noto Sans", sans-serif; color: #555; }
.globe { margin: 3px -3px -3px 3px; }
.rule { width: 1px; height: 16px; margin-left: 6px; background: #cfd1d4; }
.avatar { width: 22px; height: 22px; margin-left: 12px; }
.more { width: 4px; height: 14px; margin-left: 18px; fill: #5f6368; }

/* router page */
.page { position: relative; flex: 1; background: #51cbd6; font-family: "DejaVu Sans", "Noto Sans CJK TC", sans-serif; font-size: 12px; color: #4d4d4d; display: flex; justify-content: center; }
.decor { position: absolute; left: 0; top: 1058px; width: 440px; height: 212px; }
.wrap { width: 1000px; display: flex; flex-direction: column; position: relative; }
.topbar { height: 90px; flex: none; display: flex; color: #fff; }
.logo { width: 131px; height: 49px; margin-top: 29px; fill: #fff; overflow: visible; font-family: "Open Sans", sans-serif; font-weight: 600; }
.modes { flex: none; display: flex; margin: 48px 0 0 104px; font-size: 16px; font-weight: 700; }
.modes a { width: 125px; height: 42px; text-align: center; line-height: 43px; }
.modes .on { background: #fff; color: #51cbd6; border-radius: 10px 10px 0 0; font-weight: 500; }
.lang { flex: none; width: 140px; height: 26px; margin: 54px 0 0 85px; border: 1px solid #1ba5b1; border-radius: 4px; background: #fff; color: #51bfca; display: flex; align-items: center; justify-content: space-between; padding: 0 8px 0 9px; }
.tools { flex: none; display: flex; gap: 13px; margin: 27px 0 0 13px; font-weight: 700; line-height: 17px; text-align: center; }
.tools a { position: relative; width: 40px; display: flex; flex-direction: column; align-items: center; }
.tools svg { fill: none; stroke: #fff; stroke-width: 2; margin-bottom: 3px; }
.update i { position: absolute; left: 23px; top: -4px; width: 15px; height: 15px; border-radius: 50%; background: #c11f63; font-size: 10px; line-height: 15px; font-weight: 400; }
.columns { flex: 1; display: flex; justify-content: space-between; }
.sidebar { width: 218px; display: flex; flex-direction: column; gap: 7px; }
.sidebar a { height: 50px; background: #fff; border-radius: 0 0 0 10px; display: flex; align-items: center; gap: 14px; padding: 0 0 2px 28px; font-size: 14px; color: #36444b; }
.sidebar svg { width: 22px; height: 22px; margin-bottom: -2px; fill: #36444b; }
.sidebar .on { background: #ffc933; }
.panel { width: 765px; background: #fff; padding: 0 50px; display: flex; flex-direction: column; align-items: flex-start; }
.title { position: relative; width: 665px; height: 67px; border-bottom: 1px solid #c6c6c6; padding-top: 36px; }
h1 { margin: 0; font-size: 16px; font-weight: 400; line-height: 24px; color: #111; }
.help { position: absolute; left: 673px; top: 24px; width: 24px; height: 24px; fill: none; stroke: #4acbd6; stroke-width: 2.4; }
button { border: 0; border-radius: 3px; background: #51cbd6; color: #fff; font: 700 12px "Noto Sans CJK TC", sans-serif; padding: 0 0 1px; }
.detect { width: 80px; height: 30px; margin: 36px 0 20px; padding-bottom: 2px; }
.form { display: grid; grid-template-columns: 214px 184px auto; row-gap: 5px; line-height: 30px; }
.form label { padding-top: 2px; height: 30px; letter-spacing: .1px; }
.field { height: 30px; border: 1px solid #e5e5e5; border-radius: 4px; line-height: 30px; padding-left: 13px; color: #111; letter-spacing: .12px; }
.first { margin-top: 20px; }
.pick { display: flex; justify-content: space-between; align-items: center; padding-right: 9px; }
.pick span { line-height: 28px; }
.pick i { border: 5px solid transparent; border-top: 7px solid #a7a9ac; border-bottom: 0; }
.hint { padding: 1px 0 0 9px; height: 30px; letter-spacing: .2px; }
.note { margin: 30px 0 0; display: flex; gap: 8px; line-height: 20px; white-space: nowrap; letter-spacing: .04px; }
.note b { font-weight: 400; color: #2d8fb5; }
.save { width: 90px; height: 32px; font-size: 14px; align-self: flex-end; margin-top: 23px; }
.version { position: absolute; left: 0; right: 0; bottom: 0; height: 43px; background: linear-gradient(rgba(16, 80, 90, .155), rgba(16, 70, 78, .21)); display: flex; justify-content: center; }
.version div { width: 1000px; padding: 1px 23px 0 10px; display: flex; line-height: 43px; white-space: pre; letter-spacing: .13px; }
.fw { width: 324px; }
.version a { text-decoration: underline; }
.support { margin: 0 19px 0 auto; }

/* dock */
.dockrow { height: 73px; flex: none; margin-top: -5px; padding-top: 5px; background: linear-gradient(90deg, #000 171px, #000 50%, #11151e 2389px, #1e2731); display: flex; }
.shark { width: 171px; height: 68px; }
.dock { width: 2218px; height: 68px; border-radius: 5px 5px 0 0; display: flex; padding-left: 4px; background: linear-gradient(90deg, #504d52 0, #504d52 17%, #55627a 25%, #566179 34%, #554c52 39%, #5b647f 44%, #60667c 58%, #69738c 74%, #6c7388 88%, #666978 100%); }
.dock svg { width: 56.04px; height: 68px; font-family: "Open Sans", "Noto Sans CJK TC", sans-serif; filter: drop-shadow(0 1px 1px rgba(0, 0, 0, .4)); }
.dock .adobe text { font-size: 25px; font-weight: 600; text-anchor: middle; }
.divider { width: 1px; height: 50px; margin: 9px 11px 0 12px; background: #3f4757; }

/* input method palette */
.ime { position: absolute; left: 700px; top: 590px; width: 218px; height: 350px; z-index: 2; background: linear-gradient(90deg, #d273ac, #bd0f80); box-shadow: 0 4px 10px rgba(0, 0, 0, .35); font-family: "Noto Sans CJK TC", sans-serif; }
.ime-bg { position: absolute; left: 0; top: 0; width: 218px; height: 350px; }
.ime-top { position: relative; display: flex; align-items: center; gap: 3px; height: 37px; padding: 0 6px 2px; }
.ime-top span { width: 21px; height: 21px; border-radius: 2px; background: linear-gradient(#a994f0, #6d48dc); color: #fff; display: flex; align-items: center; justify-content: center; font-size: 14px; line-height: 12px; }
.ime-top svg { width: 19px; height: 19px; fill: none; stroke: #fff; stroke-width: 3; }
.ime-top .thin { stroke-width: 1.5; }
.ime-top .big { width: 28px; height: 27px; margin-right: -1px; font-size: 21px; font-weight: 500; background: linear-gradient(#8b78dd, #4c28b8); }
.ime-top .name { font-size: 12px; background: #50418d; }
.ime-top .q { font-size: 24px; font-weight: 700; }
.ime-body { position: relative; display: flex; gap: 5px; padding: 2px 8px 0 9px; }
.pad { width: 162px; height: 210px; background: linear-gradient(90deg, #606060, #8a8a8a 20%, #8a8a8a 80%, #606060); border: 1px solid #4d4d4d; padding: 5px 7px 0 3px; }
.keys { display: grid; grid-template-columns: repeat(3, 1fr); gap: 2px; height: 151px; }
.keys svg { width: 100%; height: 49px; background: #fff; border: 1px solid #777; fill: none; stroke: #000; stroke-width: 4; stroke-linecap: round; stroke-linejoin: round; }
.keys circle { fill: #000; stroke: none; }
.pad-foot { display: flex; justify-content: space-between; padding: 7px 4px 0 5px; }
.pad-foot span { height: 39px; background: #fff; border: 1px solid #777; border-radius: 3px; display: flex; align-items: center; }
.punct { width: 89px; justify-content: space-between; color: #000; font-family: "Noto Serif CJK TC", "Noto Sans CJK TC", serif; font-size: 28px; line-height: 36px; }
.punct b { font-weight: 600; margin-left: -2px; }
.cancel { width: 41px; justify-content: center; font-size: 15px; color: #222; white-space: nowrap; }
.pager { width: 34px; display: flex; flex-direction: column; gap: 2px; margin-top: -1px; }
.pager div { height: 104px; border: 1px solid #888; border-radius: 2px; background: radial-gradient(circle at -20px -10px, #e5e5e5 85px, #bbb 86px, #ddd 130px); text-align: center; font-size: 14px; line-height: 41px; padding-top: 14px; color: #111; position: relative; }
.pager div + div { padding-top: 10px; }
.pager i { position: absolute; left: 3px; top: 4px; color: #e3201c; font-size: 17px; font-weight: 700; line-height: 20px; }
.ime-foot { position: relative; display: flex; gap: 8px; padding: 10px 0 0 11px; }
.tip { width: 165px; height: 76px; background: #000; border: 1px solid #777; color: #fff; font-family: "Noto Serif CJK TC", "Noto Sans CJK TC", serif; font-size: 13px; line-height: 15px; font-weight: 600; white-space: nowrap; }
.scroll { display: flex; flex-direction: column; gap: 2px; }
.scroll svg { width: 22px; height: 38px; border: 1px solid #aaa; border-radius: 3px; background: linear-gradient(160deg, #777, #555 60%, #aaa); fill: #fff; }
```
